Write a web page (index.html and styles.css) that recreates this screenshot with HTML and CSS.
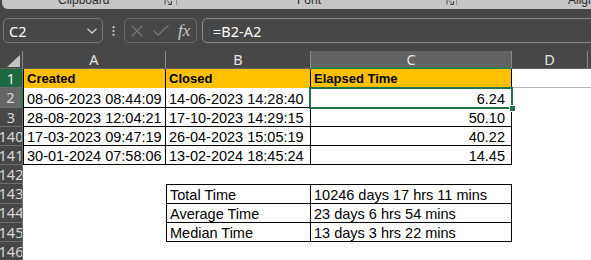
FILE: index.html
```html
<!DOCTYPE html>
<html>
<head>
<meta charset="utf-8">
<link rel="stylesheet" href="styles.css">
</head>
<body>
<div class="ribbon">
  <div class="rgroup g-clip">
    <span class="rlabel">Clipboard</span>
    <svg class="launcher" width="9" height="5" viewBox="0 0 9 5"><path d="M1 0V4.5M3 0.5L7 4.5M4 4.5H7.5V1" fill="none" stroke="#4a4a4a" stroke-width="1"/></svg>
  </div>
  <span class="rsep"></span>
  <div class="rgroup g-font">
    <span class="rlabel">Font</span>
    <svg class="launcher l2" width="9" height="5" viewBox="0 0 9 5"><path d="M1 0V4.5M3 0.5L7 4.5M4 4.5H7.5V1" fill="none" stroke="#4a4a4a" stroke-width="1"/></svg>
  </div>
  <span class="rsep"></span>
  <div class="rgroup g-align">
    <span class="rlabel">Alignment</span>
  </div>
</div>

<div class="fbar">
  <div class="namebox">
    <span>C2</span>
    <svg width="10" height="6" viewBox="0 0 10 6"><path d="M0.5 0.7L5 5L9.5 0.7" fill="none" stroke="#cfcfcf" stroke-width="1.3"/></svg>
  </div>
  <div class="dots">
    <svg width="3" height="10" viewBox="0 0 3 10"><circle cx="1.5" cy="1.2" r="1.1" fill="#cfcfcf"/><circle cx="1.5" cy="5" r="1.1" fill="#cfcfcf"/><circle cx="1.5" cy="8.8" r="1.1" fill="#cfcfcf"/></svg>
  </div>
  <div class="fxbox">
    <svg class="xicon" width="12" height="12" viewBox="0 0 12 12"><path d="M0.5 0.5L11.5 11.5M11.5 0.5L0.5 11.5" stroke="#7a7a7a" stroke-width="1.1" fill="none"/></svg>
    <svg class="chk" width="16" height="11" viewBox="0 0 16 11"><path d="M0.5 5.5L5 10L15.5 0.5" stroke="#7a7a7a" stroke-width="1.1" fill="none"/></svg>
    <span class="fx">fx</span>
  </div>
  <div class="formula">=B2-A2</div>
</div>

<div class="sheet">
  <div class="ch corner"><svg width="13" height="12" viewBox="0 0 13 12"><path d="M0 12H13V0Z" fill="#c4c4c4"/></svg></div>
  <div class="ch">A</div>
  <div class="ch">B</div>
  <div class="ch csel">C</div>
  <div class="ch">D</div>
  <div class="ch last"></div>

  <div class="rh r1">1</div>
  <div class="c hd bl">Created</div>
  <div class="c hd">Closed</div>
  <div class="c hd">Elapsed Time</div>
  <div class="c gl"></div>
  <div class="c gl"></div>

  <div class="rh rsel">2</div>
  <div class="c b bl">08-06-2023 08:44:09</div>
  <div class="c b">14-06-2023 14:28:40</div>
  <div class="c b num selcell">6.24<span class="selbox"><span class="handle"></span></span></div>
  <div class="c"></div>
  <div class="c"></div>

  <div class="rh">3</div>
  <div class="c b bl">28-08-2023 12:04:21</div>
  <div class="c b">17-10-2023 14:29:15</div>
  <div class="c b num">50.10</div>
  <div class="c"></div>
  <div class="c"></div>

  <div class="rh">140</div>
  <div class="c b bl">17-03-2023 09:47:19</div>
  <div class="c b">26-04-2023 15:05:19</div>
  <div class="c b num">40.22</div>
  <div class="c"></div>
  <div class="c"></div>

  <div class="rh">141</div>
  <div class="c b bl">30-01-2024 07:58:06</div>
  <div class="c b">13-02-2024 18:45:24</div>
  <div class="c b num">14.45</div>
  <div class="c"></div>
  <div class="c"></div>

  <div class="rh">142</div>
  <div class="c"></div>
  <div class="c"></div>
  <div class="c"></div>
  <div class="c"></div>
  <div class="c"></div>

  <div class="rh">143</div>
  <div class="c"></div>
  <div class="c b bl bt">Total Time</div>
  <div class="c b bt">10246 days 17 hrs 11 mins</div>
  <div class="c"></div>
  <div class="c"></div>

  <div class="rh">144</div>
  <div class="c"></div>
  <div class="c b bl">Average Time</div>
  <div class="c b">23 days 6 hrs 54 mins</div>
  <div class="c"></div>
  <div class="c"></div>

  <div class="rh">145</div>
  <div class="c"></div>
  <div class="c b bl">Median Time</div>
  <div class="c b">13 days 3 hrs 22 mins</div>
  <div class="c"></div>
  <div class="c"></div>

  <div class="rh">146</div>
  <div class="c"></div>
  <div class="c"></div>
  <div class="c"></div>
  <div class="c"></div>
  <div class="c"></div>
</div>
</body>
</html>
```

FILE: styles.css
```css
* { box-sizing: border-box; }
html, body { margin: 0; padding: 0; }
body {
  background: #474747;
  font-family: "Noto Sans", "Liberation Sans", sans-serif;
  width: 591px;
  height: 260px;
  overflow: hidden;
}

/* ribbon */
.ribbon {
  margin-left: 2px;
  height: 9px;
  background: #c6c6c6;
  border-bottom-left-radius: 6px;
  display: flex;
  align-items: flex-start;
  overflow: hidden;
  font-family: "Liberation Sans", Arial, sans-serif;
  font-size: 12px;
  color: #2b2b2b;
}
.rgroup { display: flex; align-items: flex-start; flex: none; }
.rlabel { line-height: 12px; margin-top: -6px; white-space: nowrap; }
.g-clip { width: 174px; }
.g-clip .rlabel { margin-left: 56px; }
.g-font { width: 279px; }
.g-font .rlabel { margin-left: 120px; }
.g-align { flex: 1; }
.g-align .rlabel { margin-left: 111px; }
.launcher { margin-left: auto; margin-right: 3px; display: block; }
.launcher.l2 { margin-right: 1px; }
.rsep { width: 1px; height: 5px; background: #8e8e8e; flex: none; }

/* formula bar */
.fbar {
  display: flex;
  height: 25px;
  margin-top: 9px;
  color: #ffffff;
  font-size: 14.5px;
}
.namebox {
  margin-left: 3px;
  width: 100px;
  border: 1px solid #787878;
  border-radius: 5px;
  display: flex;
  align-items: center;
  justify-content: space-between;
  padding: 0 5px 0 5px;
}
.dots {
  width: 21px;
  display: flex;
  align-items: center;
  justify-content: center;
}
.fxbox {
  width: 73px;
  border: 1px solid #6c6c6c;
  border-radius: 5px;
  display: flex;
  align-items: center;
  padding-left: 6px;
}
.chk { margin-left: 10px; }
.fx {
  margin-left: 9px;
  font-family: "Liberation Serif", "DejaVu Serif", serif;
  font-style: italic;
  font-size: 17px;
  color: #c9c9c9;
  line-height: 1;
}
.formula {
  margin-left: 5px;
  flex: 1;
  margin-right: -20px;
  border: 1px solid #8c8c8c;
  border-radius: 5px;
  padding-left: 10px;
  display: flex;
  align-items: center;
}

/* sheet */
.sheet {
  margin-top: 8px;
  display: grid;
  grid-template-columns: 23px 143px 145px 201px 76px 1fr;
  grid-template-rows: 18.3px;
  grid-auto-rows: 19.2px;
}
.ch {
  background: #474747;
  border-right: 1px solid #8a8a8a;
  border-bottom: 1px solid #626262;
  color: #e4e4e4;
  font-size: 14.5px;
  display: flex;
  align-items: center;
  justify-content: center;
  line-height: 1;
}
.ch.corner {
  justify-content: flex-end;
  align-items: flex-end;
  padding: 0 2px 1px 0;
}
.ch.corner svg { display: block; }
.ch.csel {
  background: #636363;
  border-bottom: 2px solid #2a7d4f;
}
.ch.last { border-right: none; }

.rh {
  background: #474747;
  border-bottom: 1px solid #6c6c6c;
  border-right: 1px solid #6c6c6c;
  color: #d8d8d8;
  font-size: 14.5px;
  display: flex;
  align-items: center;
  justify-content: center;
  overflow: hidden;
  line-height: 1;
  white-space: nowrap;
}
.rh.r1 { background: #1d6a40; color: #ededed; }
.rh.rsel { background: #666666; border-right: 2px solid #2a7d4f; }

.c {
  background: #ffffff;
  color: #000000;
  font-family: "Liberation Sans", Arial, sans-serif;
  font-size: 14.5px;
  line-height: 16px;
  display: flex;
  align-items: flex-end;
  padding: 0 3px 1px 3px;
  white-space: nowrap;
}
.c.hd {
  background: #ffc000;
  font-weight: bold;
  font-size: 13px;
  border-right: 1px solid #000;
}
.c.gl { border-bottom: 1px solid #b4b4b4; }
.c.b {
  border-right: 1px solid #000;
  border-bottom: 1px solid #000;
  padding-bottom: 0;
}
.c.bl { border-left: 1px solid #000; }
.c.bt { border-top: 1px solid #000; }
.c.num { justify-content: flex-end; padding-right: 6px; }

.selcell { position: relative; }
.selbox {
  position: absolute;
  left: -2px;
  top: -1px;
  right: -2px;
  bottom: -2px;
  border: 2px solid #217346;
}
.handle {
  position: absolute;
  right: -5px;
  bottom: -5px;
  width: 7px;
  height: 7px;
  background: #217346;
  border: 1px solid #ffffff;
}
```
